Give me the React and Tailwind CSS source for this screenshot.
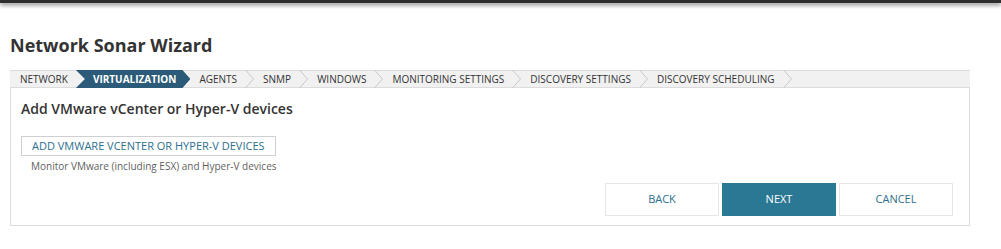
const steps = [
  "NETWORK",
  "VIRTUALIZATION",
  "AGENTS",
  "SNMP",
  "WINDOWS",
  "MONITORING SETTINGS",
  "DISCOVERY SETTINGS",
  "DISCOVERY SCHEDULING",
];
const active = 1;

function Chevron() {
  return (
    <svg width="9" height="18" viewBox="0 0 9 18" className="shrink-0">
      <path d="M0.5 0 L8.5 9 L0.5 18" fill="none" stroke="#c8c8c8" strokeWidth="1" />
    </svg>
  );
}

function Breadcrumb() {
  return (
    <div className="flex h-[18px] items-center border-y border-[#dcdcdc] bg-[#f1f1f1] pl-[10px] text-[10px] text-[#333]">
      {steps.map((s, i) => {
        if (i === active) {
          return (
            <div
              key={s}
              className="flex h-[18px] items-center bg-[#2b5b78] pl-[17px] pr-[14px] font-bold text-white [clip-path:polygon(0_0,calc(100%-8px)_0,100%_50%,calc(100%-8px)_100%,0_100%,9px_50%)]"
            >
              {s}
            </div>
          );
        }
        return (
          <div key={s} className="flex h-[18px] items-center">
            <span className={i === 0 ? "" : "pl-[9px]"}>{s}</span>
            {i + 1 === active ? (
              <span className="w-[8px]" />
            ) : (
              <span className="ml-[8px]">
                <Chevron />
              </span>
            )}
          </div>
        );
      })}
    </div>
  );
}

export default function App() {
  return (
    <div className="h-[249px] w-[1001px] overflow-hidden bg-white font-['Open_Sans',sans-serif]">
      <div className="h-[3px] w-full bg-[#2e2e2e] shadow-[0_2px_4px_rgba(0,0,0,0.55)]" />
      <h1 className="ml-[10px] mt-[30px] text-[18px] font-bold leading-[24px] text-[#333]">
        Network Sonar Wizard
      </h1>
      <div className="ml-[10px] mt-[13px] w-[960px]">
        <Breadcrumb />
        <div className="h-[138px] border border-t-0 border-[#dcdcdc] px-[10px] pt-[11px]">
          <h2 className="text-[14px] font-semibold leading-[20px] text-[#333]">
            Add VMware vCenter or Hyper-V devices
          </h2>
          <button className="mt-[17px] flex h-[20px] items-center border border-[#cfcfcf] px-[10px] text-[11px] text-[#2d6f8e]">
            ADD VMWARE VCENTER OR HYPER-V DEVICES
          </button>
          <p className="ml-[10px] mt-[3px] text-[10px] leading-[14px] text-[#5f5f5f]">
            Monitor VMware (including ESX) and Hyper-V devices
          </p>
          <div className="mt-[10px] flex justify-end gap-[3px] pr-[6px]">
            <button className="h-[33px] w-[114px] border border-[#e6e6e6] bg-white text-[11px] text-[#2d6f8e]">
              BACK
            </button>
            <button className="h-[33px] w-[114px] bg-[#2a7893] text-[11px] text-white">
              NEXT
            </button>
            <button className="h-[33px] w-[114px] border border-[#e6e6e6] bg-white text-[11px] text-[#2d6f8e]">
              CANCEL
            </button>
          </div>
        </div>
      </div>
    </div>
  );
}
